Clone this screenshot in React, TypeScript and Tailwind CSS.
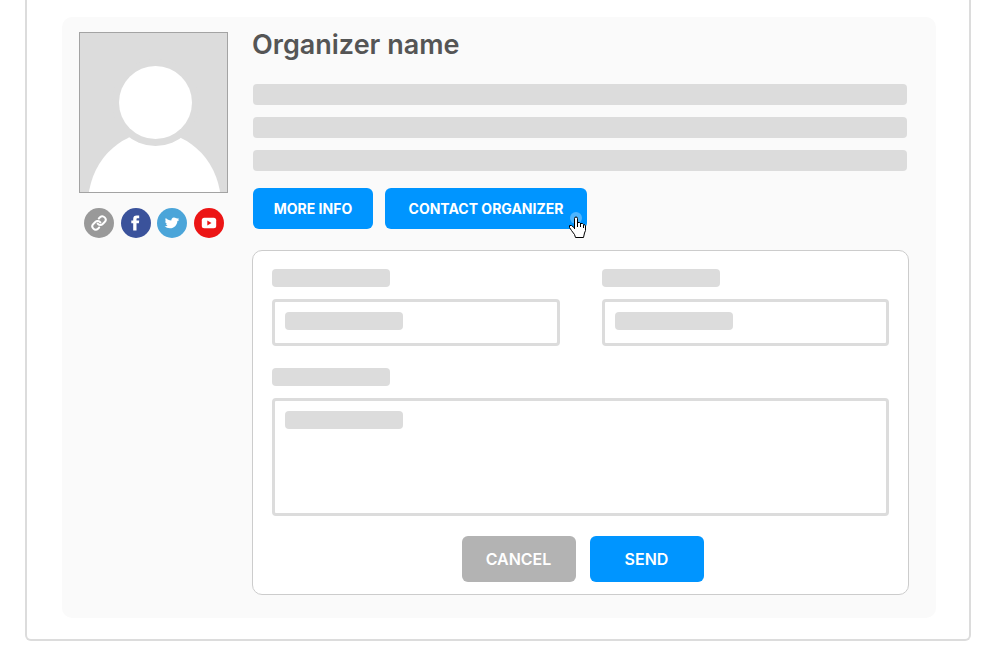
import { Link } from 'lucide-react';
import clsx from 'clsx';

function FacebookIcon() {
  return (
    <svg width="9" height="16" viewBox="0 0 9 16" fill="currentColor">
      <path d="M2.2 15.5V8.3H.3V5.5H2.2V3.9C2.2 1.5 3.4.4 5.7.4H8.2V3.2H6.7C5.8 3.2 5.5 3.5 5.5 4.3V5.5H8.2L7.9 8.3H5.5V15.5Z" />
    </svg>
  );
}

function TwitterIcon() {
  return (
    <svg width="16" height="12" viewBox="0 0 16 12" fill="currentColor">
      <path d="M1.8.9C3.3 2.4 5 3.3 7.3 3.6C7.3 1.7 8.2.4 9.9.4C10.9.4 11.6.8 12.1 1.3C12.9 1.4 13.8 1.5 15.3 1.9C14.5 2.2 14.1 2.5 13.9 2.8L15.2 3.3L13.4 3.9C13.2 8 10.2 11.2 6 11.2C3.8 11.2 2 10.5.6 9.3C2 9.5 3.1 9.2 3.9 8.6C2.8 8.3 2.2 7.7 2 6.9H3C1.8 6.3 1.2 5.4 1.1 4.3L2.2 4.6C1.2 3.5 1.1 2.2 1.8.9Z" />
    </svg>
  );
}

function YoutubeIcon() {
  return (
    <svg width="16" height="12" viewBox="0 0 16 12">
      <rect x=".8" y=".8" width="14.4" height="10.4" rx="2.5" fill="#fff" />
      <path d="M6.3 3.5L10.5 6L6.3 8.5Z" fill="#ec1515" />
    </svg>
  );
}

const socials = [
  { name: 'Website', color: 'bg-[#999999]', icon: <Link size={16} strokeWidth={3} /> },
  { name: 'Facebook', color: 'bg-[#3a529b]', icon: <FacebookIcon /> },
  { name: 'Twitter', color: 'bg-[#4ba5d9]', icon: <TwitterIcon /> },
  { name: 'YouTube', color: 'bg-[#ec1515]', icon: <YoutubeIcon /> },
];

function Avatar() {
  return (
    <svg
      viewBox="0 0 147 159"
      className="block w-full border border-[#a3a3a3] bg-[#dcdcdc]"
      role="img"
      aria-label="Organizer"
    >
      <ellipse cx="74.5" cy="171" rx="66.5" ry="72" fill="#fff" />
      <circle cx="75.5" cy="69.5" r="43.5" fill="#dcdcdc" />
      <circle cx="75.5" cy="69.5" r="36.5" fill="#fff" />
    </svg>
  );
}

function HandCursor() {
  return (
    <span className="pointer-events-none absolute top-6 right-px">
      <span className="absolute top-0 left-px size-3 rounded-full bg-white/30" />
      <svg width="17" height="22" viewBox="0 0 17 22" className="relative mt-1 block">
        <path
          d="M5.5 13V2.5Q5.5 1 7 1T8.5 2.5V6.5H10.5L11.5 7.5H13.5L14.5 8.5H15.5L16.5 10V14.5L15.5 17L14.5 21.5H6.5L5.5 18.5L2.5 14.5L.5 11.5V9.5H2.5L5.5 12"
          fill="#fff"
          stroke="#000"
        />
        <path d="M8.5 6V11M11.5 7V11M14.5 9V12" stroke="#000" />
      </svg>
    </span>
  );
}

function Bar({ className }: { className?: string }) {
  return <span className={clsx('block rounded bg-[#dcdcdc]', className)} />;
}

interface FieldProps {
  id: string;
  label: string;
  multiline?: boolean;
}

function Field({ id, label, multiline }: FieldProps) {
  const box = 'block w-full rounded border-3 border-[#dcdcdc] bg-white px-3';
  return (
    <div className="flex flex-col gap-3">
      <label htmlFor={id} aria-label={label}>
        <Bar className="h-[18px] w-[118px]" />
      </label>
      <div className="relative">
        {multiline ? (
          <textarea id={id} className={clsx(box, 'h-[118px] resize-none py-2')} />
        ) : (
          <input id={id} type="text" className={clsx(box, 'h-[47px]')} />
        )}
        <Bar className="pointer-events-none absolute top-[13px] left-[13px] h-[18px] w-[118px]" />
      </div>
    </div>
  );
}

const actionButton = 'h-[41px] rounded-md bg-[#0095ff] text-sm font-bold text-white';

export default function App() {
  return (
    <main className="mr-[29px] ml-[25px] rounded-b-md border-2 border-t-0 border-[#dcdcdc] pt-[17px] pr-[33px] pb-[21px] pl-[35px] font-['Inter',sans-serif]">
      <section className="flex gap-6 rounded-[10px] bg-[#fafafa] pt-[15px] pr-[27px] pb-[23px] pl-[17px]">
        <aside className="w-[149px] shrink-0">
          <Avatar />
          <div className="mt-[15px] flex justify-between pr-1 pl-[5px]">
            {socials.map(({ name, color, icon }) => (
              <a
                key={name}
                href="#"
                aria-label={name}
                className={clsx('flex size-[30px] items-center justify-center rounded-full text-white', color)}
              >
                {icon}
              </a>
            ))}
          </div>
        </aside>

        <div className="min-w-0 flex-1">
          <h2 className="text-[27px] leading-[26px] font-semibold text-[#555555]">Organizer name</h2>
          <div className="mt-[26px] flex flex-col gap-3 pr-0.5 pl-px">
            <Bar className="h-[21px]" />
            <Bar className="h-[21px]" />
            <Bar className="h-[21px]" />
          </div>
          <div className="mt-[17px] flex gap-3 px-px">
            <button type="button" className={clsx(actionButton, 'w-[120px]')}>
              MORE INFO
            </button>
            <button type="button" className={clsx(actionButton, 'relative w-[202px]')}>
              CONTACT ORGANIZER
              <HandCursor />
            </button>
          </div>

          <form className="mt-[21px] rounded-[10px] border border-[#cccccc] bg-white px-[19px] pt-[18px] pb-3">
            <div className="grid grid-cols-2 gap-[42px]">
              <Field id="name" label="Name" />
              <Field id="email" label="Email" />
            </div>
            <div className="mt-[22px]">
              <Field id="message" label="Message" multiline />
            </div>
            <div className="mt-5 flex justify-center gap-3.5 pl-1 text-base font-semibold text-white">
              <button type="reset" className="h-[46px] w-[114px] rounded-md bg-[#b3b3b3]">
                CANCEL
              </button>
              <button type="submit" className="h-[46px] w-[114px] rounded-md bg-[#0095ff]">
                SEND
              </button>
            </div>
          </form>
        </div>
      </section>
    </main>
  );
}
